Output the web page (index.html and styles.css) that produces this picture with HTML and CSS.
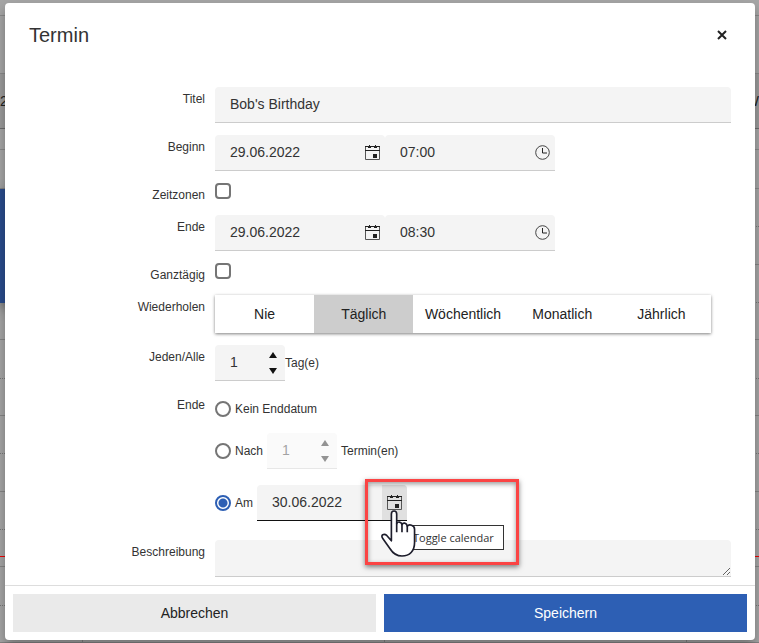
FILE: index.html
```html
<!DOCTYPE html>
<html lang="de">
<head>
    <meta charset="UTF-8">
    <meta name="viewport" content="width=device-width, initial-scale=1.0">
    <title>Termin</title>
    <link rel="stylesheet" href="styles.css">
</head>
<body>
    <svg class="sprite" aria-hidden="true">
        <symbol id="icon-calendar" viewBox="0 0 15 15">
            <path d="M.5 1.500h14v13h-14z" fill="none" stroke="#555"/>
            <path d="M0 1h15v1H0zM0 5h15v1H0zM3 1h3v2H3zM4 0h1v3H4zM9 1h3v2H9zM10 0h1v3h-1zM8 9h4v4H8z" fill="#222"/>
        </symbol>
        <symbol id="icon-clock" viewBox="0 0 15 15">
            <circle cx="7.500" cy="7.500" r="6.800" fill="none" stroke="#444"/>
            <path d="M7.500 3v5H12" fill="none" stroke="#222"/>
        </symbol>
        <symbol id="icon-up" viewBox="0 0 8 6"><path d="M4 0l4 6H0z" fill="currentColor"/></symbol>
        <symbol id="icon-down" viewBox="0 0 8 6"><path d="M4 6l4-6H0z" fill="currentColor"/></symbol>
    </svg>

    <!-- Kalender im Hintergrund -->
    <div class="scheduler" aria-hidden="true">
        <div class="scheduler-top"></div>
        <div class="scheduler-nav"></div>
        <div class="scheduler-toolbar">
            <span>2</span>
            <span>W</span>
        </div>
        <div class="scheduler-days"></div>
        <div class="scheduler-allday"></div>
        <div class="scheduler-hours">
            <div class="hour"></div>
            <div class="hour"></div>
            <div class="hour"></div>
            <div class="hour"></div>
            <div class="hour"></div>
            <div class="hour"></div>
            <div class="event"></div>
            <div class="now-line"></div>
        </div>
    </div>

    <div class="overlay">
        <form class="dialog" role="dialog" aria-labelledby="dialogTitle" onsubmit="return false">
            <div class="dialog-header">
                <h1 id="dialogTitle">Termin</h1>
                <button type="button" class="close" aria-label="Schließen">
                    <svg viewBox="0 0 10 10"><path d="M1 1l8 8M9 1l-8 8" stroke="#222" stroke-width="2"/></svg>
                </button>
            </div>

            <div class="dialog-body">
                <label class="name" for="title">Titel</label>
                <div class="field">
                    <input type="text" id="title" value="Bob's Birthday">
                </div>

                <label class="name" for="startDate">Beginn</label>
                <div class="pair">
                    <div class="field date">
                        <input type="text" id="startDate" value="29.06.2022">
                        <button type="button" aria-label="Kalender"><svg class="icon"><use href="#icon-calendar"/></svg></button>
                    </div>
                    <div class="field date">
                        <input type="text" aria-label="Beginn Uhrzeit" value="07:00">
                        <button type="button" aria-label="Uhrzeit"><svg class="icon"><use href="#icon-clock"/></svg></button>
                    </div>
                </div>

                <label class="name" for="timezones">Zeitzonen</label>
                <div class="check"><input type="checkbox" id="timezones"></div>

                <label class="name" for="endDate">Ende</label>
                <div class="pair">
                    <div class="field date">
                        <input type="text" id="endDate" value="29.06.2022">
                        <button type="button" aria-label="Kalender"><svg class="icon"><use href="#icon-calendar"/></svg></button>
                    </div>
                    <div class="field date">
                        <input type="text" aria-label="Ende Uhrzeit" value="08:30">
                        <button type="button" aria-label="Uhrzeit"><svg class="icon"><use href="#icon-clock"/></svg></button>
                    </div>
                </div>

                <label class="name" for="allDay">Ganztägig</label>
                <div class="check"><input type="checkbox" id="allDay"></div>

                <span class="name" id="repeatLabel">Wiederholen</span>
                <div class="button-group" role="group" aria-labelledby="repeatLabel">
                    <button type="button">Nie</button>
                    <button type="button" class="selected" aria-pressed="true">Täglich</button>
                    <button type="button">Wöchentlich</button>
                    <button type="button">Monatlich</button>
                    <button type="button">Jährlich</button>
                </div>

                <label class="name" for="interval">Jeden/Alle</label>
                <div class="line">
                    <div class="field number">
                        <input type="text" id="interval" value="1">
                        <div class="spin">
                            <button type="button" aria-label="Mehr"><svg><use href="#icon-up"/></svg></button>
                            <button type="button" aria-label="Weniger"><svg><use href="#icon-down"/></svg></button>
                        </div>
                    </div>
                    <span>Tag(e)</span>
                </div>

                <span class="name" id="endLabel">Ende</span>
                <div class="end-options" role="radiogroup" aria-labelledby="endLabel">
                    <div class="line">
                        <input type="radio" name="end" id="endNever">
                        <label class="option" for="endNever">Kein Enddatum</label>
                    </div>
                    <div class="line">
                        <input type="radio" name="end" id="endCount">
                        <label class="option" for="endCount">Nach</label>
                        <div class="field number disabled">
                            <input type="text" aria-label="Anzahl Termine" value="1" disabled>
                            <div class="spin">
                                <button type="button" aria-label="Mehr" disabled><svg><use href="#icon-up"/></svg></button>
                                <button type="button" aria-label="Weniger" disabled><svg><use href="#icon-down"/></svg></button>
                            </div>
                        </div>
                        <span class="unit">Termin(en)</span>
                    </div>
                    <div class="line">
                        <input type="radio" name="end" id="endOn" checked>
                        <label class="option" for="endOn">Am</label>
                        <div class="field until focused">
                            <input type="text" aria-label="Enddatum" value="30.06.2022">
                            <button type="button" class="hovered" aria-label="Toggle calendar"><svg class="icon"><use href="#icon-calendar"/></svg></button>
                            <div class="highlight"></div>
                            <div class="tooltip" role="tooltip">Toggle calendar</div>
                            <svg class="pointer" viewBox="0 0 105 142" aria-hidden="true">
                                <path d="M31 93V12C31 0 47 0 47 12V41C50 34 61 35 63 44C66 37 77 38 79 49C84 42 101 45 101 58V98C101 124 86 139 63 139C46 139 35 130 27 117L5 86C-3 75 9 70 17 77Z" fill="#fff" stroke="#1d1d2b" stroke-width="5" stroke-linejoin="round"/>
                                <path d="M47 40V67M63 43V67M79 48V67" fill="none" stroke="#1d1d2b" stroke-width="5"/>
                            </svg>
                        </div>
                    </div>
                </div>

                <label class="name" for="description">Beschreibung</label>
                <textarea id="description" rows="1"></textarea>
            </div>

            <div class="dialog-footer">
                <button type="button" class="cancel">Abbrechen</button>
                <button type="submit" class="save">Speichern</button>
            </div>
        </form>
    </div>
</body>
</html>
```
FILE: styles.css
```css
* {
    box-sizing: border-box;
}
body {
    margin: 0;
    font-family: "Liberation Sans", Arial, sans-serif;
    font-size: 12px;
    line-height: 16px;
    color: #333;
}
button, input, textarea {
    font: inherit;
    color: inherit;
    margin: 0;
}
button {
    border: 0;
    padding: 0;
    background: none;
    cursor: pointer;
}
.sprite {
    display: none;
}

/* Kalender im Hintergrund */
.scheduler {
    display: flex;
    flex-direction: column;
    height: 100vh;
    background-color: #a6a6a6;
    overflow: hidden;
}
.scheduler-top, .scheduler-nav, .scheduler-days, .scheduler-allday {
    border-bottom: 1px solid #8a8a8a;
}
.scheduler-top {
    height: 16px;
}
.scheduler-nav {
    height: 58px;
}
.scheduler-toolbar {
    display: flex;
    justify-content: space-between;
    align-items: center;
    height: 55px;
    border-bottom: 1px solid #6c6c6c;
    background-color: #9b9b9b;
    font-size: 14px;
    color: #222;
}
.scheduler-days {
    height: 21px;
}
.scheduler-allday {
    height: 39px;
}
.scheduler-hours {
    position: relative;
    flex: 1;
    display: flex;
    flex-direction: column;
    background: repeating-linear-gradient(to right, #858585 0 1px, transparent 1px 302px) 82px 0;
}
.hour {
    flex: 1;
    border-bottom: 1px solid #858585;
}
.hour::before {
    content: "";
    display: block;
    height: 50%;
    border-bottom: 1px dotted #777;
}
.event {
    position: absolute;
    top: 0;
    left: 0;
    width: 80px;
    height: 25%;
    background-color: #2a4c8c;
    box-shadow: 0 4px 12px rgba(0, 0, 0, 0.4);
}
.now-line {
    position: absolute;
    bottom: 86px;
    left: 0;
    right: 0;
    border-top: 1px solid #f00000;
}

/* Dialog */
.overlay {
    position: absolute;
    top: 0;
    left: 0;
    right: 0;
    padding: 3px 4px 3px 5px;
}
.dialog {
    background-color: #fff;
    border-radius: 4px;
    box-shadow: 0 6px 12px rgba(0, 0, 0, 0.3);
}
.dialog-header {
    display: flex;
    justify-content: space-between;
    align-items: center;
    height: 64px;
    padding: 0 24px;
}
.dialog-header h1 {
    margin: 0;
    font-size: 20px;
    font-weight: normal;
    line-height: 24px;
}
.close {
    width: 18px;
    height: 18px;
}
.close svg {
    display: block;
    width: 10px;
    height: 10px;
    margin: auto;
}
.dialog-body {
    display: grid;
    grid-template-columns: 176px 1fr;
    column-gap: 10px;
    row-gap: 12px;
    padding: 20px 24px 8px;
}
.name {
    padding-top: 4px;
    text-align: right;
}
.pair, .line {
    display: flex;
    align-items: center;
}

.field {
    position: relative;
    display: flex;
    height: 36px;
    border-bottom: 1px solid #ccc;
    border-radius: 4px 4px 0 0;
    background-color: #f4f4f4;
    font-size: 14px;
}
.field input {
    flex: 1;
    min-width: 0;
    padding: 0 0 2px 15px;
    border: 0;
    outline: 0;
    background: none;
}
.field > button {
    display: flex;
    align-items: center;
    justify-content: center;
    width: 25px;
    border-radius: 0 4px 0 0;
}
.icon {
    width: 15px;
    height: 15px;
}
.date {
    width: 170px;
}
.until {
    width: 150px;
}
.number {
    width: 70px;
}
.focused {
    border-bottom-color: #111;
}
.hovered {
    background-color: #e0e0e0;
}
.disabled {
    opacity: 0.45;
}
.spin {
    display: flex;
    flex-direction: column;
    justify-content: center;
    width: 25px;
    color: #111;
}
.spin button {
    display: flex;
    align-items: center;
    justify-content: center;
    height: 16px;
}
.spin svg {
    width: 8px;
    height: 6px;
}

.check {
    height: 20px;
}
input[type="checkbox"], input[type="radio"] {
    appearance: none;
    display: block;
    width: 16px;
    height: 16px;
    border: 2px solid #757575;
    background-color: #fff;
}
input[type="checkbox"] {
    border-radius: 4px;
}
input[type="radio"] {
    border-radius: 50%;
}
input[type="radio"]:checked {
    border-color: #2d5fb4;
    background: radial-gradient(circle, #2d5fb4 4px, #fff 5px);
}

.button-group {
    display: flex;
    height: 38px;
    margin-right: 20px;
    box-shadow: 0 1px 3px rgba(0, 0, 0, 0.5);
}
.button-group button {
    flex: 1 1 0;
    background-color: #fff;
    font-size: 14px;
    color: #222;
}
.button-group .selected {
    background-color: #cdcdcd;
}

.end-options {
    display: flex;
    flex-direction: column;
    gap: 16px;
    padding: 8px 0 7px;
}
.end-options .option {
    margin: 0 4px;
}
.unit {
    margin-left: 4px;
}

.highlight {
    position: absolute;
    top: -6px;
    left: 108px;
    width: 154px;
    height: 86px;
    border: 3px solid #fb4444;
    box-shadow: 0 2px 5px rgba(0, 0, 0, 0.5), inset 0 2px 5px rgba(0, 0, 0, 0.4);
    pointer-events: none;
}
.tooltip {
    position: absolute;
    top: 40px;
    left: 147px;
    padding: 4px 9px 3px 8px;
    border: 1px solid #333;
    background-color: #fff;
    font-family: "Open Sans", sans-serif;
    font-size: 11px;
    white-space: nowrap;
}
.pointer {
    position: absolute;
    top: 25px;
    left: 124px;
    width: 35px;
    height: 47px;
}

textarea {
    display: block;
    width: 100%;
    height: 37px;
    padding: 8px 16px;
    border: 0;
    border-bottom: 1px solid #ccc;
    border-radius: 4px 4px 0 0;
    background-color: #f4f4f4;
    resize: vertical;
}

.dialog-footer {
    display: flex;
    gap: 8px;
    padding: 8px;
    border-top: 1px solid #ddd;
}
.dialog-footer button {
    flex: 1;
    height: 38px;
    font-size: 14px;
}
.cancel {
    background-color: #eaeaea;
    color: #222;
}
.save {
    background-color: #2d5fb4;
    color: #fff;
}
```
